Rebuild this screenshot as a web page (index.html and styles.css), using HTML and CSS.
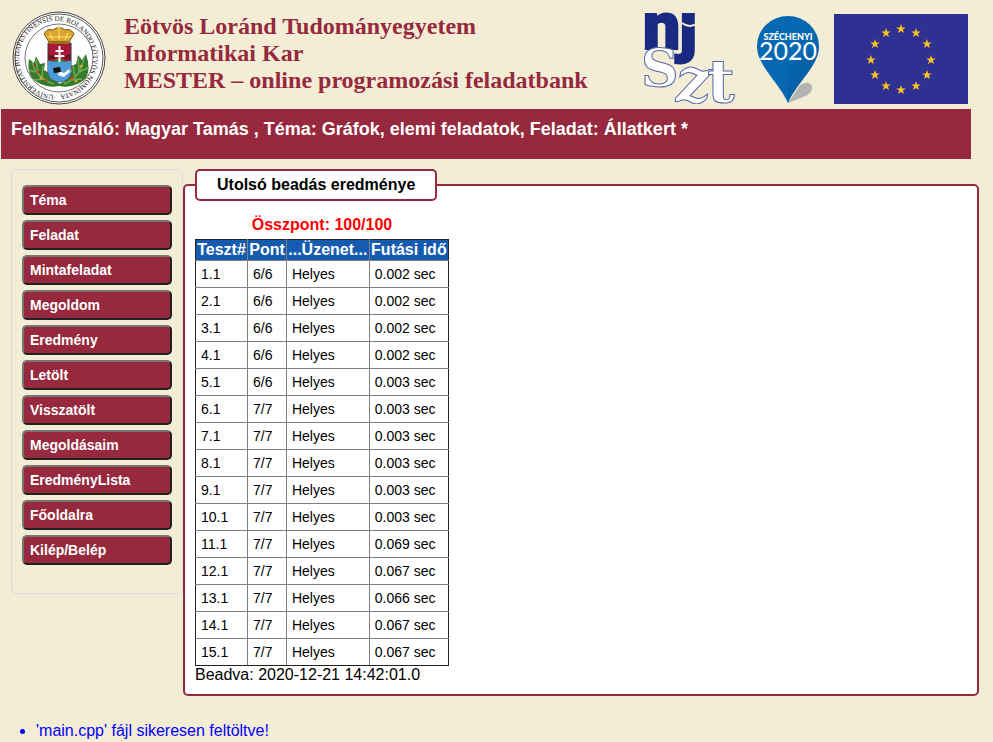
FILE: index.html
```html
<!DOCTYPE html>
<html lang="hu">
<head>
<meta charset="utf-8">
<meta name="viewport" content="width=device-width, initial-scale=1">
<title>MESTER – online programozási feladatbank</title>
<link rel="stylesheet" href="styles.css">
</head>
<body>
<header class="header">
  <svg class="seal" viewBox="0 0 94 94" role="img" aria-label="ELTE">
    <circle cx="47" cy="47" r="46" fill="#fff" stroke="#444" stroke-width="1"/>
    <circle cx="47" cy="47" r="44" fill="none" stroke="#555" stroke-width="1"/>
    <circle cx="47" cy="47" r="34" fill="#fff" stroke="#777" stroke-width="1"/>
    <path id="seal-ring" d="M44 83.900A37 37 0 1 1 44.100 83.900" fill="none"/>
    <text class="seal-text"><textPath href="#seal-ring">·UNIVERSITAS BUDAPESTINENSIS DE ROLANDO EÖTVÖS NOMINATA</textPath></text>
    <g fill="#347a2c">
      <path d="M47 75Q31 78 20 67Q15 60 17 48l5 4 2-7 4 8 5-1-1 7 5 3 2 6 8 4z"/>
      <path d="M47 75Q63 78 74 67Q79 58 74 43l-4 6-4-5-2 9-5 2 1 6-5 3-2 6-6 3z"/>
    </g>
    <g fill="none" stroke="#74a854" stroke-width="1.500">
      <path d="M20 51q4 16 22 22M24 48l2 14M17 59l10 3M31 55l-1 12M22 69l12-1M52 73Q70 66 72 46M66 47l1 14M76 57l-9 4M61 55l2 10M58 69l12-1"/>
    </g>
    <g fill="#d93820"><circle cx="26" cy="61" r="1.500"/><circle cx="34" cy="69" r="1.300"/><circle cx="60" cy="67" r="1.500"/><circle cx="22" cy="55" r="1"/></g>
    <g fill="#d8aa24"><circle cx="29" cy="67" r="1.500"/><circle cx="69" cy="55" r="1.500"/><circle cx="64" cy="70" r="1.500"/></g>
    <path d="M36 32h23v29q0 8-11.500 10Q36 69 36 61z" fill="#a91838" stroke="#333"/>
    <path d="M36 50h23v11q0 8-11.500 10Q36 69 36 61z" fill="#4a9bd6"/>
    <path d="M39 51l8-4 9 4z" fill="#35843b"/>
    <path d="M46.500 35h2v4h3v2h-3v3h4v2h-4v5h-2v-5h-4v-2h4v-3h-3v-2h3z" fill="#fff"/>
    <path d="M47 60l5 2 5-4 1 3-6 5-6-2z" fill="#fff"/>
    <path d="M41 57l7-1 1 5-7 1z" fill="#111"/>
    <path d="M37 31l-5-8q3-6 9-4 6-5 12 0 6-2 9 4l-5 8z" fill="#dba52c" stroke="#77561b"/>
    <path d="M38 22l3 7M47 18v11M56 22l-3 7M35 26h24M47 14v4M45 16h4" fill="none" stroke="#ffe47c"/>
    <path d="M37 30h20v3H37z" fill="#98701d"/>
    <text class="seal-year" x="36" y="48">16</text><text class="seal-year" x="52" y="48">35</text>
  </svg>
  <h1 class="title">Eötvös Loránd Tudományegyetem<br>Informatikai Kar<br>MESTER – online programozási feladatbank</h1>
  <div class="partners">
    <svg class="njszt" viewBox="0 0 94 92" role="img" aria-label="NJSZT">
      <g class="nj"><text x="1" y="37">n</text><text x="37" y="37">j</text></g>
      <path d="M40 11q8 6 16 0" fill="none" stroke="#f4edd6" stroke-width="2"/>
      <g class="szt"><text class="s" x="-1" y="74">S</text><text class="z" x="34" y="90">z</text><text class="t" x="65" y="90">t</text></g>
    </svg>
    <svg class="szechenyi" viewBox="0 0 64 88" role="img" aria-label="Széchenyi 2020">
      <path d="M32 87l12-18q9-5 12 1 2 7-9 11-7 3-15 6z" fill="#b4b4b5"/>
      <path d="M32 87C23 66 1 50 1 30a31 30 0 0 1 62 0C63 50 41 66 32 87z" fill="#0768b2"/>
      <path d="M32 52V87C41 66 63 50 63 30z" fill="#045c9f" opacity=".5"/>
      <text class="szechenyi-name" x="32" y="24">SZÉCHENYI</text>
      <text class="szechenyi-year" x="32" y="44">2020</text>
    </svg>
    <svg class="eu" viewBox="0 0 134 90" role="img" aria-label="Európai Unió">
      <defs><path id="star" d="M0-5L1.200-1.600H4.800L1.900.600 3 4 0 1.900-3 4-1.900.600-4.800-1.600H-1.200z"/></defs>
      <path d="M0 0h134v90H0z" fill="#2e3192"/>
      <g fill="#fdc51b">
        <use href="#star" x="67" y="15"/><use href="#star" x="82" y="19"/><use href="#star" x="93" y="30"/>
        <use href="#star" x="97" y="46"/><use href="#star" x="93" y="61"/><use href="#star" x="82" y="72"/>
        <use href="#star" x="67" y="76"/><use href="#star" x="52" y="72"/><use href="#star" x="41" y="61"/>
        <use href="#star" x="37" y="46"/><use href="#star" x="41" y="30"/><use href="#star" x="52" y="19"/>
      </g>
    </svg>
  </div>
</header>
<div class="status">Felhasználó: Magyar Tamás , Téma: Gráfok, elemi feladatok, Feladat: Állatkert *</div>
<div class="layout">
  <nav class="menu">
    <button type="button">Téma</button>
    <button type="button">Feladat</button>
    <button type="button">Mintafeladat</button>
    <button type="button">Megoldom</button>
    <button type="button">Eredmény</button>
    <button type="button">Letölt</button>
    <button type="button">Visszatölt</button>
    <button type="button">Megoldásaim</button>
    <button type="button">EredményLista</button>
    <button type="button">Főoldalra</button>
    <button type="button">Kilép/Belép</button>
  </nav>
  <fieldset class="result">
    <legend>Utolsó beadás eredménye</legend>
    <table>
      <caption>Összpont: 100/100</caption>
      <thead><tr><th>Teszt#</th><th>Pont</th><th>...Üzenet...</th><th>Futási idő</th></tr></thead>
      <tbody>
        <tr><td>1.1</td><td>6/6</td><td>Helyes</td><td>0.002 sec</td></tr>
        <tr><td>2.1</td><td>6/6</td><td>Helyes</td><td>0.002 sec</td></tr>
        <tr><td>3.1</td><td>6/6</td><td>Helyes</td><td>0.002 sec</td></tr>
        <tr><td>4.1</td><td>6/6</td><td>Helyes</td><td>0.002 sec</td></tr>
        <tr><td>5.1</td><td>6/6</td><td>Helyes</td><td>0.003 sec</td></tr>
        <tr><td>6.1</td><td>7/7</td><td>Helyes</td><td>0.003 sec</td></tr>
        <tr><td>7.1</td><td>7/7</td><td>Helyes</td><td>0.003 sec</td></tr>
        <tr><td>8.1</td><td>7/7</td><td>Helyes</td><td>0.003 sec</td></tr>
        <tr><td>9.1</td><td>7/7</td><td>Helyes</td><td>0.003 sec</td></tr>
        <tr><td>10.1</td><td>7/7</td><td>Helyes</td><td>0.003 sec</td></tr>
        <tr><td>11.1</td><td>7/7</td><td>Helyes</td><td>0.069 sec</td></tr>
        <tr><td>12.1</td><td>7/7</td><td>Helyes</td><td>0.067 sec</td></tr>
        <tr><td>13.1</td><td>7/7</td><td>Helyes</td><td>0.066 sec</td></tr>
        <tr><td>14.1</td><td>7/7</td><td>Helyes</td><td>0.067 sec</td></tr>
        <tr><td>15.1</td><td>7/7</td><td>Helyes</td><td>0.067 sec</td></tr>
      </tbody>
    </table>
    <div class="submitted">Beadva: 2020-12-21 14:42:01.0</div>
  </fieldset>
</div>
<ul class="messages"><li>'main.cpp' fájl sikeresen feltöltve!</li></ul>
</body>
</html>
```
FILE: styles.css
```css
* { box-sizing: border-box; }
body {
  margin: 0;
  background: #f4edd6;
  color: #000;
  font: 16px/18px "Liberation Sans", Arial, sans-serif;
}
.header {
  display: flex;
  align-items: flex-start;
  padding: 11px 25px 4px 12px;
}
.header svg { display: block; flex: none; }
.seal { width: 94px; height: 94px; }
.seal-text { font: 7px "Liberation Serif", serif; fill: #111; }
.seal-year { font: bold 6px "Liberation Serif", serif; fill: #111; }
.title {
  margin: 2px 0 0 18px;
  color: #96293d;
  font: bold 24px/27px "Liberation Serif", serif;
}
.partners {
  display: flex;
  align-items: flex-end;
  margin-left: auto;
  padding-top: 1px;
}
.njszt { width: 94px; height: 92px; margin-right: 20px; }
.szechenyi { width: 64px; height: 88px; margin-right: 14px; }
.eu { width: 134px; height: 90px; }
.nj { font: 900 66px Roboto, sans-serif; fill: #1a2a83; stroke: #1a2a83; stroke-width: 2px; }
.szt { fill: #fff; stroke: #5664a6; stroke-width: 1px; }
.s { font: bold 52px "DejaVu Serif", serif; }
.z { font: italic bold 62px "DejaVu Serif", serif; }
.t { font: bold 60px "DejaVu Serif", serif; }
.szechenyi-name { font: 900 9px Lato, sans-serif; fill: #fff; text-anchor: middle; }
.szechenyi-year { font: 25px Lato, sans-serif; fill: #fff; text-anchor: middle; }
.status {
  min-height: 50px;
  margin: 0 22px 0 1px;
  padding: 10px;
  background: #96293d;
  color: #fff;
  font-size: 18px;
  font-weight: bold;
  line-height: 20px;
}
.layout {
  display: flex;
  align-items: flex-start;
  margin: 10px 14px 0 11px;
}
.menu {
  display: flex;
  flex: none;
  flex-direction: column;
  gap: 5px;
  width: 172px;
  padding: 15px 10px 28px;
  border: 1px solid #ddd;
  border-radius: 5px;
}
.menu button {
  height: 30px;
  padding: 0 6px;
  border: 2px solid;
  border-color: #767676 #212121 #212121 #767676;
  border-radius: 5px;
  background: #96293d;
  color: #fff;
  font: bold 14px/16px "Liberation Sans", Arial, sans-serif;
  text-align: left;
}
.result {
  flex: 1;
  min-width: 0;
  margin: 0;
  padding: 10px;
  border: 2px solid #96293d;
  border-radius: 5px;
  background: #fff;
}
.result legend {
  padding: 5px 20px;
  border: 2px solid #96293d;
  border-radius: 5px;
  background: #fff;
  font-weight: bold;
}
table { width: 254px; border-collapse: collapse; border: 1px solid #222; }
caption { padding: 5px; color: #f00; font-weight: bold; }
th { padding: 1px; border: 1px solid #808080; border-top-color: #222; background: #155bb0; color: #fff; }
td { padding: 5px; border: 1px solid #808080; font-size: 14px; line-height: 16px; }
tr > :first-child { border-left-color: #222; }
tr > :last-child { border-right-color: #222; }
tbody tr:last-child td { border-bottom-color: #222; }
.messages { margin: 26px 0 0; padding: 0 0 0 36px; color: #00f; }
```
